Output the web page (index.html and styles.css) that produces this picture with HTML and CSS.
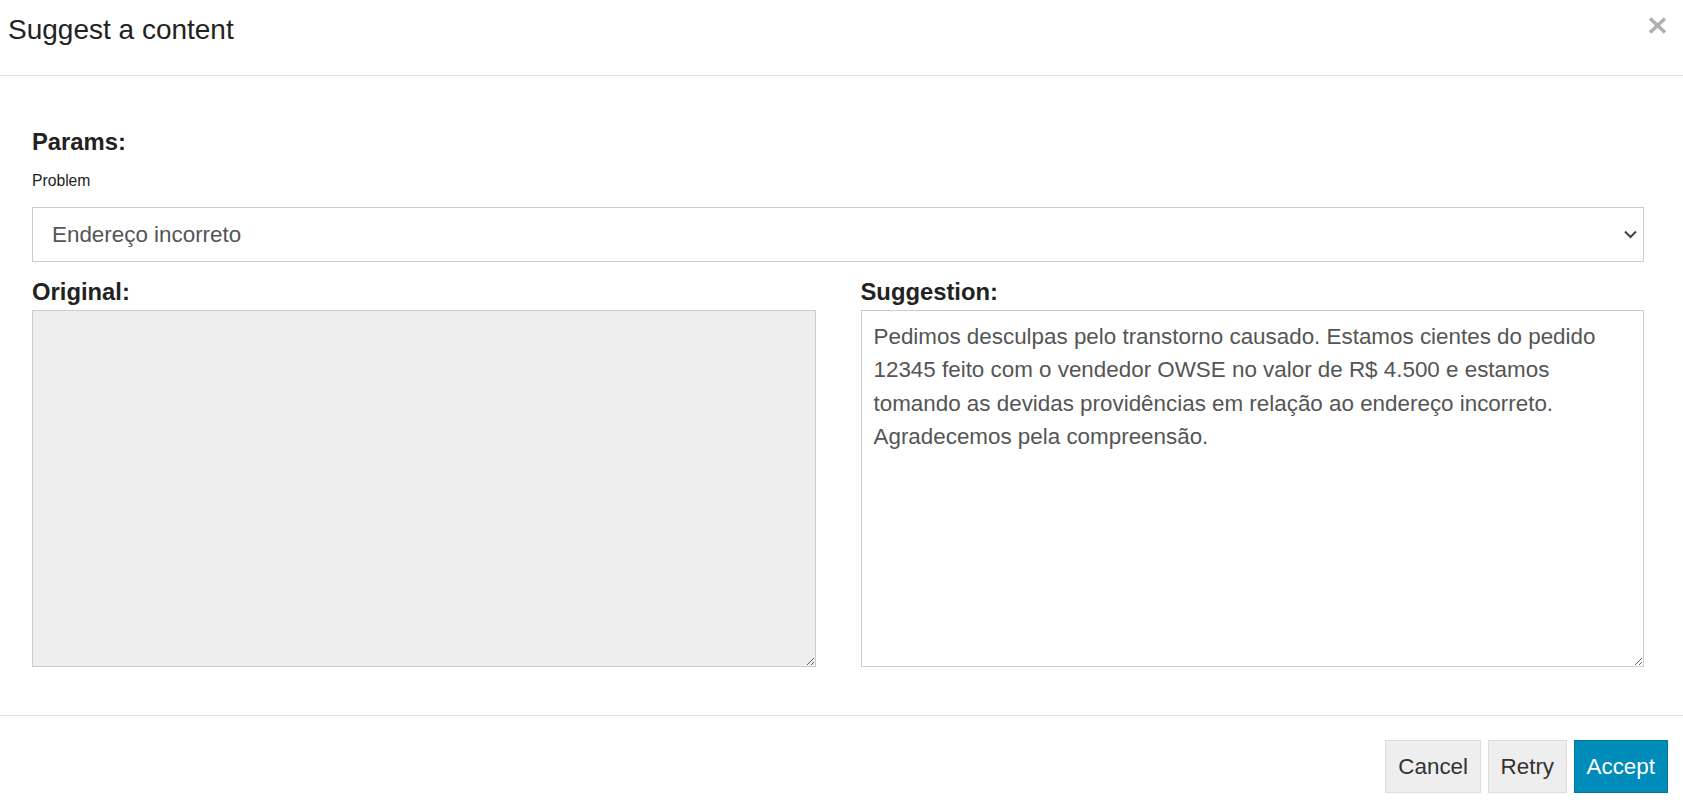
FILE: index.html
```html
<!DOCTYPE html>
<html lang="en">
<head>
<meta charset="utf-8">
<title>Suggest a content</title>
<link rel="stylesheet" href="styles.css">
</head>
<body>
<div class="modal">
  <div class="modal-header">
    <h4 class="modal-title">Suggest a content</h4>
    <span class="close" aria-label="Close"><svg width="19" height="17" viewBox="0 0 19 17"><path d="M2 1.5 L17 15.5 M17 1.5 L2 15.5" fill="none" stroke="#b0b0b0" stroke-width="3.6"/></svg></span>
  </div>
  <div class="modal-body">
    <h5 class="section-title">Params:</h5>
    <label class="small-label">Problem</label>
    <div class="select">
      <span>Endereço incorreto</span>
      <svg class="chevron" width="13" height="9" viewBox="0 0 13 9"><path d="M1 1.5 L6.5 7 L12 1.5" fill="none" stroke="#3d444a" stroke-width="2"/></svg>
    </div>
    <div class="columns">
      <div class="col">
        <h5 class="col-title">Original:</h5>
        <textarea class="area area-disabled" disabled></textarea>
      </div>
      <div class="col">
        <h5 class="col-title">Suggestion:</h5>
        <textarea class="area">Pedimos desculpas pelo transtorno causado. Estamos cientes do pedido 12345 feito com o vendedor OWSE no valor de R$ 4.500 e estamos tomando as devidas providências em relação ao endereço incorreto. Agradecemos pela compreensão.</textarea>
      </div>
    </div>
  </div>
  <div class="modal-footer">
    <button class="btn btn-default">Cancel</button>
    <button class="btn btn-default">Retry</button>
    <button class="btn btn-primary">Accept</button>
  </div>
</div>
</body>
</html>
```
FILE: styles.css
```css
html, body {
  margin: 0;
  padding: 0;
  background: #fff;
}
body {
  font-family: "Liberation Sans", Arial, sans-serif;
  color: #222;
  font-size: 22.4px;
  line-height: 1.5;
}
.modal-header {
  height: 75px;
  border-bottom: 1px solid #e5e5e5;
  display: flex;
  justify-content: space-between;
  align-items: flex-start;
  padding: 0 16px 0 8px;
}
.modal-title {
  margin: 13px 0 0 0;
  font-size: 28px;
  line-height: 1.2;
  font-weight: normal;
  color: #222;
}
.close {
  margin-top: 17px;
  display: block;
  line-height: 0;
}
.close svg {
  display: block;
}
.modal-body {
  padding: 52px 39px 48px 32px;
}
.section-title {
  margin: 0;
  font-size: 23.8px;
  line-height: 1.2;
  font-weight: bold;
  color: #222;
}
.small-label {
  display: block;
  margin-top: 12.5px;
  font-size: 15.7px;
  line-height: 23.5px;
  color: #222;
}
.select {
  margin-top: 14.5px;
  height: 53px;
  border: 1px solid #ccc;
  display: flex;
  align-items: center;
  justify-content: space-between;
  padding: 0 6px 0 19px;
  color: #555;
  font-size: 22.4px;
}
.chevron {
  display: block;
}
.columns {
  margin-top: 16px;
  display: grid;
  grid-template-columns: 1fr 1fr;
  column-gap: 45px;
}
.col-title {
  margin: 0 0 3px 0;
  font-size: 23.8px;
  line-height: 1.2;
  font-weight: bold;
  color: #222;
}
.area {
  display: block;
  box-sizing: border-box;
  width: 100%;
  height: 357px;
  margin: 0;
  border: 1px solid #ccc;
  border-radius: 0;
  padding: 9px 12px;
  font-family: "Liberation Sans", Arial, sans-serif;
  font-size: 22.4px;
  line-height: 33.6px;
  color: #555;
  background: #fff;
  resize: both;
  outline: none;
}
.area-disabled {
  background: #eee;
}
.modal-footer {
  border-top: 1px solid #e5e5e5;
  display: flex;
  justify-content: flex-end;
  gap: 6.5px;
  padding: 24px 15px 13px 0;
}
.btn {
  font-family: "Liberation Sans", Arial, sans-serif;
  font-size: 22.4px;
  line-height: 33.6px;
  padding: 9px 12px;
  border: 1px solid #ddd;
  border-radius: 0;
  margin: 0;
  cursor: pointer;
}
.btn-default {
  background: #eee;
  color: #333;
}
.btn-primary {
  background: #008cba;
  border-color: #0079a1;
  color: #fff;
}
```
